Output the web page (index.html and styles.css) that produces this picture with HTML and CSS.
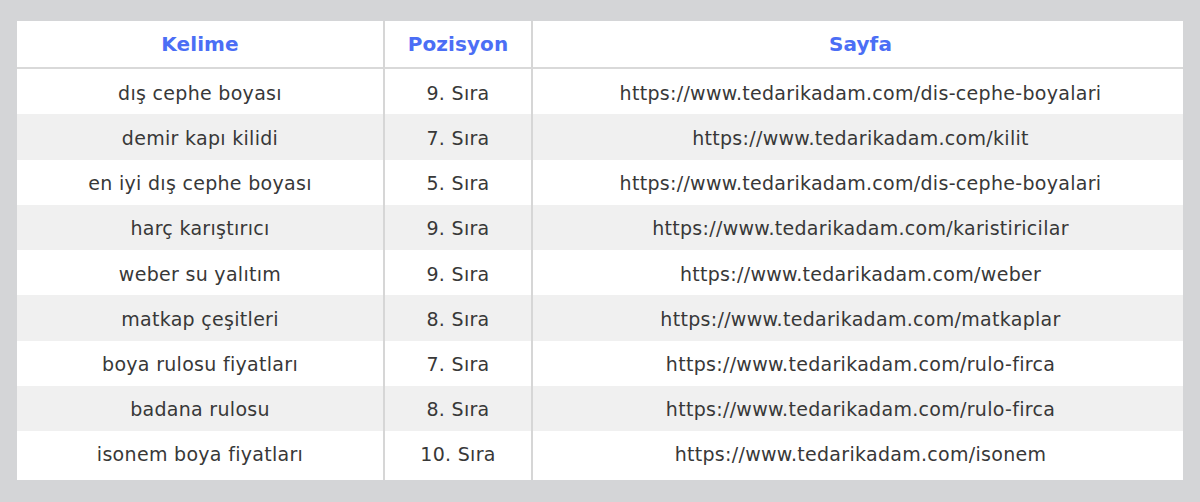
FILE: index.html
```html
<!DOCTYPE html>
<html lang="tr">
<head>
<meta charset="utf-8">
<link rel="stylesheet" href="styles.css">
</head>
<body>
<div class="card">
  <div class="grid">
    <div class="cell head">Kelime</div>
    <div class="cell head mid">Pozisyon</div>
    <div class="cell head page">Sayfa</div>

    <div class="cell">dış cephe boyası</div>
    <div class="cell mid">9. Sıra</div>
    <div class="cell page">https://www.tedarikadam.com/dis-cephe-boyalari</div>

    <div class="cell alt">demir kapı kilidi</div>
    <div class="cell alt mid">7. Sıra</div>
    <div class="cell alt page">https://www.tedarikadam.com/kilit</div>

    <div class="cell">en iyi dış cephe boyası</div>
    <div class="cell mid">5. Sıra</div>
    <div class="cell page">https://www.tedarikadam.com/dis-cephe-boyalari</div>

    <div class="cell alt">harç karıştırıcı</div>
    <div class="cell alt mid">9. Sıra</div>
    <div class="cell alt page">https://www.tedarikadam.com/karistiricilar</div>

    <div class="cell">weber su yalıtım</div>
    <div class="cell mid">9. Sıra</div>
    <div class="cell page">https://www.tedarikadam.com/weber</div>

    <div class="cell alt">matkap çeşitleri</div>
    <div class="cell alt mid">8. Sıra</div>
    <div class="cell alt page">https://www.tedarikadam.com/matkaplar</div>

    <div class="cell">boya rulosu fiyatları</div>
    <div class="cell mid">7. Sıra</div>
    <div class="cell page">https://www.tedarikadam.com/rulo-firca</div>

    <div class="cell alt">badana rulosu</div>
    <div class="cell alt mid">8. Sıra</div>
    <div class="cell alt page">https://www.tedarikadam.com/rulo-firca</div>

    <div class="cell last">isonem boya fiyatları</div>
    <div class="cell last mid">10. Sıra</div>
    <div class="cell last page">https://www.tedarikadam.com/isonem</div>
  </div>
</div>
</body>
</html>
```

FILE: styles.css
```css
html, body {
  margin: 0;
  padding: 0;
}
body {
  background: #d4d5d7;
  width: 1200px;
  height: 502px;
  padding: 21px 17px 0 17px;
  box-sizing: border-box;
  font-family: "DejaVu Sans", "Liberation Sans", sans-serif;
}
.card {
  background: #ffffff;
  width: 1166px;
  height: 459px;
}
.grid {
  display: grid;
  grid-template-columns: 366px 150px 650px;
  grid-template-rows: 48px repeat(8, 45.25px) 49px;
}
.cell {
  display: flex;
  align-items: center;
  justify-content: center;
  padding-top: 2px;
  box-sizing: border-box;
  font-size: 19px;
  letter-spacing: 0.3px;
  color: #383838;
}
.head {
  padding-top: 0;
  font-size: 20px;
  letter-spacing: 0.1px;
  font-weight: 700;
  color: #4b6ef5;
  border-bottom: 2px solid #d9d9d9;
}
.mid {
  border-left: 2px solid #d6d6d6;
  border-right: 2px solid #d6d6d6;
}
.page {
  padding-left: 5px;
}
.alt {
  background: #f0f0f0;
}
.last {
  padding-top: 0;
  padding-bottom: 4px;
}
```
